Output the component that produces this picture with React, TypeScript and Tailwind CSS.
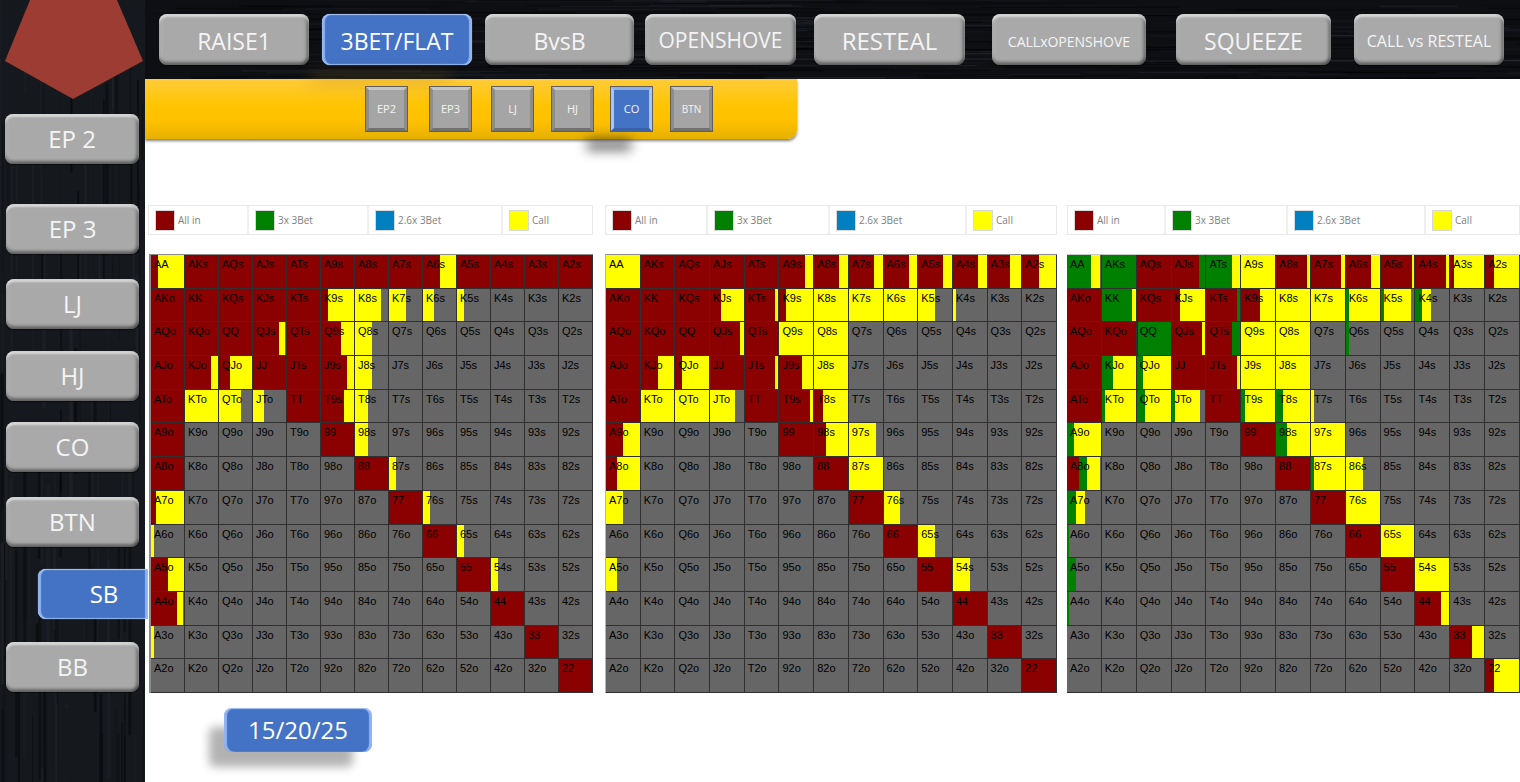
import React from "react";

const RANKS = "AKQJT98765432".split("");
const COLORS: Record<string, string> = { R: "#8b0000", G: "#008000", Y: "#ffff00" };

const P1 =
  "AA:R20,Y80 AKs:R AQs:R AJs:R ATs:R A9s:R A8s:R A7s:R A6s:R51,Y49 A5s:R A4s:R A3s:R A2s:R " +
  "AKo:R KK:R KQs:R KJs:R KTs:R K9s:R20,Y80 K8s:Y80 K7s:Y50 K6s:Y33 K5s:Y20 " +
  "AQo:R KQo:R QQ:R QJs:R79,Y19 QTs:R Q9s:R60,Y40 Q8s:Y50 " +
  "AJo:R KJo:R79,Y20 QJo:R33,Y67 JJ:R JTs:R J9s:R79,Y20 J8s:Y50 " +
  "ATo:R KTo:Y QTo:Y66 JTo:Y33 TT:R T9s:R70,Y30 T8s:Y38 " +
  "A9o:R 99:R 98s:Y38 A8o:R 88:R 87s:Y20 A7o:R15,Y85 77:R 76s:Y20 " +
  "A6o:Y10 66:R 65s:Y20 A5o:R50,Y50 55:R 54s:Y20 A4o:R78,Y20 44:R A3o:Y10 33:R 22:R";

const P2 =
  "AA:Y AKs:R AQs:R AJs:R ATs:R A9s:R75,Y25 A8s:R75,Y25 A7s:R75,Y25 A6s:R75,Y25 A5s:R75,Y25 A4s:R75,Y25 A3s:R65,Y35 A2s:R50,Y50 " +
  "AKo:R KK:R KQs:R KJs:R33,Y67 KTs:R90,Y10 K9s:R20,Y80 K8s:Y K7s:Y K6s:Y K5s:Y50 K4s:Y8 " +
  "AQo:R KQo:R QQ:R QJs:R90,Y10 QTs:R Q9s:Y Q8s:Y " +
  "AJo:R KJo:R50,Y50 QJo:R20,Y80 JJ:R JTs:R90,Y10 J9s:R67,Y33 J8s:Y " +
  "ATo:R KTo:Y QTo:Y JTo:Y75 TT:R T9s:R90,Y10 T8s:R25,Y75 " +
  "A9o:R50,Y50 99:R 98s:R35,Y65 97s:Y80 A8o:R33,Y67 88:R 87s:Y " +
  "A7o:Y50 77:R 76s:Y50 66:R 65s:Y50 A5o:Y33 55:R 54s:Y50 44:R 33:R 22:R";

const P3 =
  "AA:G72,Y25 AKs:G AQs:R AJs:R80,G20 ATs:G75,Y25 A9s:Y A8s:R90,Y10 A7s:R90,Y10 A6s:R75,Y25 A5s:R92,Y8 A4s:R90,Y10 A3s:R10,Y90 A2s:R25,Y75 " +
  "AKo:R KK:G90,Y10 KQs:R KJs:R25,Y75 KTs:R90,G10 K9s:R55,Y45 K8s:Y K7s:Y K6s:G10,Y90 K5s:G10,Y80 K4s:G20,Y25 " +
  "AQo:R KQo:R QQ:R5,G95 QJs:R90,Y10 QTs:R75,G25 Q9s:Y Q8s:Y Q6s:G10 " +
  "AJo:R KJo:G33,Y67 QJo:G20,Y80 JJ:R JTs:R90,Y10 J9s:Y J8s:Y " +
  "ATo:R KTo:G10,Y90 QTo:G25,Y75 JTo:G10,Y75 TT:R T9s:G10,Y90 T8s:G20,Y80 T7s:Y10 " +
  "A9o:G20,Y80 99:R 98s:G33,Y67 97s:Y A8o:R35,G25,Y38 88:R 87s:G10,Y90 86s:Y50 " +
  "A7o:G28,Y25 77:R 76s:Y A6o:G5 66:R 65s:Y A5o:G28 55:R 54s:Y A4o:G5 44:R75,Y25 33:R65,Y35 22:R25,Y75";

function parse(s: string) {
  const m: Record<string, { c: string; w: number }[]> = {};
  s.split(" ").forEach((e) => {
    const [h, v] = e.split(":");
    m[h] = v.split(",").map((p) => ({
      c: COLORS[p[0]],
      w: p.length > 1 ? Number(p.slice(1)) : 100,
    }));
  });
  return m;
}

function hand(r: number, c: number) {
  if (r === c) return RANKS[r] + RANKS[r];
  return r < c ? RANKS[r] + RANKS[c] + "s" : RANKS[c] + RANKS[r] + "o";
}

function Grid({ data, className }: { data: string; className: string }) {
  const map = parse(data);
  const cells = [];
  for (let r = 0; r < 13; r++) {
    for (let c = 0; c < 13; c++) {
      const h = hand(r, c);
      cells.push(
        <div key={h} className="relative flex overflow-hidden border-r border-b border-[#303030] bg-[#666666]">
          {(map[h] || []).map((s, i) => (
            <div key={i} className="h-full" style={{ width: `${s.w}%`, background: s.c }} />
          ))}
          <span className="absolute left-[3px] top-[4px] font-['Liberation_Sans',sans-serif] text-[11px] leading-none text-black">
            {h}
          </span>
        </div>
      );
    }
  }
  return (
    <div
      className={
        "mt-[19px] grid h-[439px] grid-cols-[repeat(13,1fr)] grid-rows-[repeat(13,1fr)] border-t border-[#8c8c8c] " +
        className
      }
    >
      {cells}
    </div>
  );
}

const LEGEND = [
  { label: "All in", color: "bg-[#8b0000]" },
  { label: "3x 3Bet", color: "bg-[#008000]" },
  { label: "2.6x 3Bet", color: "bg-[#0080c0]" },
  { label: "Call", color: "bg-[#ffff00]" },
];

function Legend({ cols }: { cols: string }) {
  return (
    <div className={"grid h-[30px] border border-[#e9e9e9] " + cols}>
      {LEGEND.map((l, i) => (
        <div key={l.label} className={"flex items-center gap-[3px] pl-[6px] " + (i < 3 ? "border-r-2 border-[#efefef]" : "")}>
          <span className={"h-[21px] w-[20px] border border-[#d8d8d8] " + l.color} />
          <span className="font-['Open_Sans',sans-serif] text-[10px] text-[#808080]">{l.label}</span>
        </div>
      ))}
    </div>
  );
}

const GRAY =
  "rounded-[8px] bg-[#a9a9a9] text-[#f4f4f4] shadow-[inset_0_3px_2px_rgba(255,255,255,0.55),inset_0_-3px_3px_rgba(0,0,0,0.38),inset_3px_0_3px_rgba(255,255,255,0.12),inset_-3px_0_3px_rgba(0,0,0,0.28),0_1px_1px_rgba(0,0,0,0.5)]";
const BLUE =
  "rounded-[8px] bg-[#4472c4] text-white shadow-[inset_3px_0_1px_rgba(170,200,255,0.75),inset_-3px_0_1px_rgba(170,200,255,0.75),inset_0_1px_1px_rgba(200,220,255,0.8),inset_0_-1px_1px_rgba(200,220,255,0.6),0_0_1px_rgba(200,220,255,0.8)]";
const FONT = "font-['Open_Sans',sans-serif]";

const TOP = [
  { t: "RAISE1", c: "ml-[14px] w-[150px] text-[23px]" },
  { t: "3BET/FLAT", c: "ml-[13px] w-[150px] text-[23px]", blue: true },
  { t: "BvsB", c: "ml-[13px] w-[149px] text-[23px]" },
  { t: "OPENSHOVE", c: "ml-[11px] w-[151px] text-[21px]" },
  { t: "RESTEAL", c: "ml-[18px] w-[151px] text-[24px]" },
  { t: "CALLxOPENSHOVE", c: "ml-[27px] w-[154px] text-[14px] font-medium" },
  { t: "SQUEEZE", c: "ml-[30px] w-[155px] text-[23px]" },
  { t: "CALL vs RESTEAL", c: "ml-[23px] w-[150px] text-[16px]" },
];

const SIDE = [
  { t: "EP 2", c: "mt-[114px] ml-[5px] w-[134px]" },
  { t: "EP 3", c: "mt-[40px] ml-[6px] w-[133px]" },
  { t: "LJ", c: "mt-[25px] ml-[6px] w-[133px]" },
  { t: "HJ", c: "mt-[22px] ml-[6px] w-[133px]" },
  { t: "CO", c: "mt-[21px] ml-[6px] w-[133px]" },
  { t: "BTN", c: "mt-[25px] ml-[6px] w-[133px]" },
  { t: "SB", c: "mt-[22px] ml-[38px] w-[110px] pl-[22px] rounded-r-none", blue: true },
  { t: "BB", c: "mt-[23px] ml-[6px] w-[133px]" },
];

const SMALL = [
  { t: "EP2", c: "ml-[220px] text-[11px]" },
  { t: "EP3", c: "ml-[21px] text-[11px]" },
  { t: "LJ", c: "ml-[19px] text-[11px]" },
  { t: "HJ", c: "ml-[17px] text-[11px]" },
  { t: "CO", c: "ml-[16px] text-[11px]", blue: true },
  { t: "BTN", c: "ml-[17px] text-[10px]" },
];

function rand(seed: number) {
  let s = seed;
  return () => {
    s = (s * 16807) % 2147483647;
    return s / 2147483647;
  };
}

function Wood({ vertical, w, h, seed }: { vertical: boolean; w: number; h: number; seed: number }) {
  const r = rand(seed);
  const count = vertical ? 110 : 300;
  const lines = [];
  for (let i = 0; i < count; i++) {
    const a = r() * (vertical ? w : h);
    const b = r() * (vertical ? h : w);
    const len = 40 + r() * (vertical ? 200 : 220);
    const light = r() > 0.5;
    const op = light ? 0.02 + r() * (vertical ? 0.04 : 0.09) : 0.15 + r() * 0.35;
    const sw = 0.5 + r() * (vertical ? 3 : 1.2);
    const stroke = light ? "#8d97a8" : "#000000";
    lines.push(
      vertical ? (
        <line key={i} x1={a} x2={a} y1={b} y2={b + len} stroke={stroke} strokeOpacity={op} strokeWidth={sw} />
      ) : (
        <line key={i} x1={b} x2={b + len} y1={a} y2={a} stroke={stroke} strokeOpacity={op} strokeWidth={sw} />
      )
    );
  }
  return (
    <svg className="absolute inset-0 h-full w-full" viewBox={`0 0 ${w} ${h}`} preserveAspectRatio="none">
      {lines}
    </svg>
  );
}

export default function App() {
  return (
    <div className="flex h-[782px] w-[1520px] overflow-hidden bg-white">
      <aside className="relative z-10 h-full w-[145px] shrink-0 bg-[#15181d]">
        <div className="absolute inset-0 overflow-hidden">
          <Wood vertical w={145} h={782} seed={4217} />
        </div>
        <svg className="absolute left-0 top-0 h-[100px] w-[145px]" viewBox="0 0 145 100">
          <polygon points="30,0 117,0 143,61 73,99 5,61" fill="#9c3c33" />
        </svg>
        <div className="relative flex flex-col">
          {SIDE.map((b) => (
            <div
              key={b.t}
              className={`flex h-[50px] items-center justify-center text-[24px] ${FONT} ${b.blue ? BLUE : GRAY} ${b.c}`}
            >
              {b.t}
            </div>
          ))}
        </div>
      </aside>

      <main className="flex min-w-0 flex-1 flex-col">
        <div className="relative flex h-[79px] shrink-0 items-start bg-[#0e0f13] pt-[14px]">
          <div className="absolute inset-0 overflow-hidden">
            <Wood vertical={false} w={1375} h={79} seed={9931} />
          </div>
          {TOP.map((b) => (
            <div
              key={b.t}
              className={`relative flex h-[51px] shrink-0 items-center justify-center pt-[3px] ${FONT} ${b.blue ? BLUE : GRAY} ${b.c}`}
            >
              {b.t}
            </div>
          ))}
        </div>

        <div className="relative flex h-[60px] w-[652px] shrink-0 items-center rounded-br-[9px] bg-[linear-gradient(180deg,#ffcb3a_0%,#ffc400_45%,#ffc000_70%,#e5b000_100%)] shadow-[0_2px_3px_rgba(0,0,0,0.5)]">
          <div className="absolute left-[165px] top-[-4px] h-[10px] w-[140px] bg-[#a87f10]/30 blur-[8px]" />
          <div className="absolute left-[442px] top-[60px] h-[12px] w-[44px] bg-black/50 blur-[6px]" />
          {SMALL.map((b) => (
            <div
              key={b.t}
              className={`relative flex h-[46px] w-[43px] shrink-0 items-center justify-center border-[4px] ${FONT} text-[#f4f4f4] outline outline-1 -outline-offset-1 outline-[#5f5f5f] ${
                b.blue
                  ? "border-t-[#8eaee6] border-l-[#a9c4f5] border-r-[#a9c4f5] border-b-[#3a62aa] bg-[#4472c4]"
                  : "border-t-[#c5c5c5] border-l-[#8d8d8d] border-r-[#8d8d8d] border-b-[#717171] bg-[#a5a5a5]"
              } ${b.c}`}
            >
              {b.t}
            </div>
          ))}
        </div>

        <div className="mt-[66px] flex shrink-0 pl-[3px]">
          <div className="w-[445px]">
            <Legend cols="grid-cols-[100px_120px_134px_1fr]" />
            <Grid data={P1} className="ml-[1px] border-l-2 border-l-[#8c8c8c]" />
          </div>
          <div className="ml-[12px] w-[452px]">
            <Legend cols="grid-cols-[102px_122px_137px_1fr]" />
            <Grid data={P2} className="border-l border-l-[#b5b5b5]" />
          </div>
          <div className="ml-[10px] w-[453px]">
            <Legend cols="grid-cols-[98px_122px_138px_1fr]" />
            <Grid data={P3} className="border-t-[#c8c8c8]" />
          </div>
        </div>

        <div
          className={`ml-[79px] mt-[15px] flex h-[44px] w-[148px] items-center justify-center text-[24px] ${FONT} ${BLUE} !shadow-[inset_3px_0_1px_rgba(170,200,255,0.75),inset_-3px_0_1px_rgba(170,200,255,0.75),inset_0_1px_1px_rgba(200,220,255,0.8),-17px_17px_10px_-2px_rgba(0,0,0,0.3)]`}
        >
          15/20/25
        </div>
      </main>
    </div>
  );
}
